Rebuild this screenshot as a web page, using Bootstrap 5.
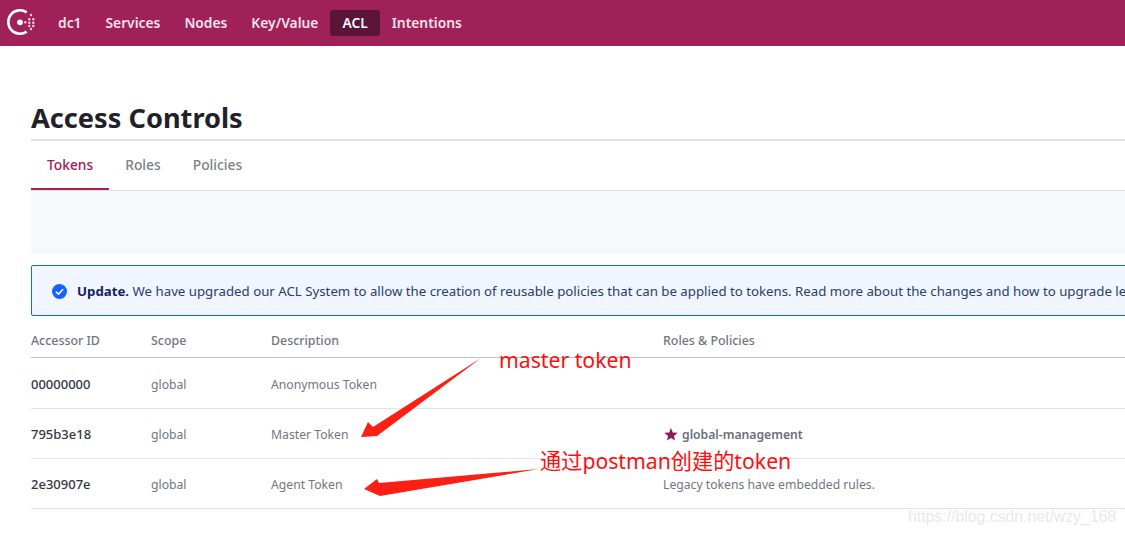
<!doctype html>
<html lang="en">

<head>
  <meta charset="utf-8">
  <meta name="viewport" content="width=device-width, initial-scale=1">
  <title>Access Controls</title>
  <link href="https://cdn.jsdelivr.net/npm/bootstrap@5.3.3/dist/css/bootstrap.min.css" rel="stylesheet">
  <style>
    body {
      font-family: "Noto Sans", "Noto Sans CJK SC", sans-serif;
      font-size: 13px;
      color: #6f7682;
      overflow: hidden;
      height: 534px;
      position: relative;
    }

    .top-bar {
      background: #a02058;
      height: 46px;
      padding-left: 7px;
    }

    .top-link {
      color: #f5e3ea;
      font-size: 13.8px;
      font-weight: 600;
      padding: 3px 12px;
      border-radius: 3px;
      text-decoration: none;
      line-height: 20px;
    }

    .top-link.is-on {
      background: #5a1437;
      color: #fff;
    }

    .logo-mark {
      margin-right: 10px;
    }

    .page-body {
      padding-left: 31px;
    }

    .page-title {
      font-size: 27.2px;
      font-weight: 700;
      line-height: 36px;
      color: #1f2329;
      margin: 54px 0 0;
      padding-bottom: 3px;
      border-bottom: 2px solid #dfe2e6;
      box-sizing: content-box;
    }

    .tab-row {
      height: 49px;
      border-bottom: 1px solid #dfe2e6;
      box-sizing: content-box;
    }

    .tab-link {
      color: #7a7f8a;
      font-size: 13.8px;
      font-weight: 500;
      padding: 0 16px;
      line-height: 48px;
      height: 49px;
      text-decoration: none;
    }

    .tab-link.is-on {
      color: #a02058;
      border-bottom: 2px solid #a02058;
    }

    .filter-strip {
      background: #f7f8fa;
      height: 63px;
    }

    .notice {
      height: 51px;
      margin-top: 11px;
      margin-right: -40px;
      padding-top: 2px;
      background: #f0f5ff;
      border: 1px solid #1563ff;
      border-radius: 2px;
      padding-left: 20px;
      white-space: nowrap;
      color: #2a3f66;
      font-size: 13.25px;
    }

    .notice b {
      color: #14245c;
      font-weight: 700;
    }

    .notice svg {
      margin-right: 10px;
      flex: none;
    }

    .t-row {
      display: grid;
      grid-template-columns: 120px 120px 392px 1fr;
      height: 50px;
      padding-top: 3px;
      align-items: center;
      border-bottom: 1px solid #e2e3ea;
      font-size: 12.2px;
    }

    .t-row.t-head {
      height: 42px;
      border-bottom-color: #bfc1c7;
      padding-top: 9px;
      font-size: 12.4px;
      font-weight: 500;
      color: #6f7682;
    }

    .t-row.t-first {
      height: 51px;
      padding-top: 4px;
    }

    .t-id {
      color: #31363f;
      font-weight: 500;
      font-size: 13px;
    }

    .t-policy {
      font-weight: 600;
      color: #6a6f7a;
    }

    .t-policy svg {
      margin: 0 4px 0 1px;
      vertical-align: -2px;
    }

    .ink-layer {
      position: absolute;
      left: 0;
      top: 0;
      pointer-events: none;
    }

    .ink-note {
      position: absolute;
      color: #fb0f0f;
      font-size: 21.2px;
      line-height: 28px;
      white-space: nowrap;
    }

    .note-one {
      left: 499px;
      top: 346px;
    }

    .note-two {
      left: 540px;
      top: 447px;
    }

    .watermark {
      position: absolute;
      left: 908px;
      top: 507px;
      font-family: "Liberation Sans", sans-serif;
      font-size: 15.8px;
      line-height: 20px;
      color: #e9e9eb;
      white-space: nowrap;
    }
  </style>
</head>

<body>

  <nav class="top-bar d-flex align-items-center">
    <svg class="logo-mark" width="29" height="30" viewBox="7 8 29 30">
      <path d="M26.7 12.4A11.7 11.7 0 1 0 26.7 31.6" fill="none" stroke="#fff" stroke-width="2.6" />
      <circle cx="20" cy="22.3" r="2.9" fill="#fff" />
      <g fill="#f3d6e2">
        <circle cx="25.3" cy="22.3" r="1.2" />
        <circle cx="31" cy="15" r="1.2" />
        <circle cx="29.3" cy="19.3" r="1.2" />
        <circle cx="33.3" cy="19.3" r="1.2" />
        <circle cx="29.3" cy="22.7" r="1.2" />
        <circle cx="33.3" cy="22.7" r="1.2" />
        <circle cx="29.3" cy="26" r="1.2" />
        <circle cx="33.3" cy="26" r="1.2" />
        <circle cx="31" cy="29" r="1.2" />
      </g>
    </svg>
    <a class="top-link" href="#">dc1</a>
    <a class="top-link" href="#">Services</a>
    <a class="top-link" href="#">Nodes</a>
    <a class="top-link" href="#">Key/Value</a>
    <a class="top-link is-on" href="#">ACL</a>
    <a class="top-link" href="#">Intentions</a>
  </nav>

  <div class="page-body">
    <h1 class="page-title">Access Controls</h1>

    <div class="tab-row d-flex">
      <a class="tab-link is-on" href="#">Tokens</a>
      <a class="tab-link" href="#">Roles</a>
      <a class="tab-link" href="#">Policies</a>
    </div>

    <div class="filter-strip"></div>

    <div class="notice d-flex align-items-center">
      <svg width="15" height="15" viewBox="0 0 15 15">
        <circle cx="7.5" cy="7.5" r="7.5" fill="#1563ff" />
        <path d="M4 7.8l2.5 2.4L11 5.2" fill="none" stroke="#fff" stroke-width="1.6" />
      </svg>
      <span><b>Update.</b> We have upgraded our ACL System to allow the creation of reusable policies that can be applied to tokens. Read more about the changes and how to upgrade le</span>
    </div>

    <div>
      <div class="t-row t-head">
        <div>Accessor ID</div>
        <div>Scope</div>
        <div>Description</div>
        <div>Roles &amp; Policies</div>
      </div>
      <div class="t-row t-first">
        <div class="t-id">00000000</div>
        <div>global</div>
        <div>Anonymous Token</div>
        <div></div>
      </div>
      <div class="t-row">
        <div class="t-id">795b3e18</div>
        <div>global</div>
        <div>Master Token</div>
        <div class="t-policy">
          <svg width="14" height="13" viewBox="0 0 14 13"><path d="M7 0l1.8 4.5 4.9.3-3.8 3.1 1.2 4.7L7 10l-4.1 2.6 1.2-4.7L.3 4.8l4.9-.3z" fill="#8e1c59" /></svg>global-management
        </div>
      </div>
      <div class="t-row">
        <div class="t-id">2e30907e</div>
        <div>global</div>
        <div>Agent Token</div>
        <div>Legacy tokens have embedded rules.</div>
      </div>
    </div>
  </div>

  <!-- annotations drawn over the screenshot -->
  <svg class="ink-layer" width="1125" height="534" viewBox="0 0 1125 534">
    <polygon points="481,358 377,436 361,437 368,422 373,427" fill="#fb1f14" />
    <polygon points="539,469 380,496 364,489 377,479 379,483" fill="#fb1f14" />
  </svg>
  <div class="ink-note note-one">master token</div>
  <div class="ink-note note-two">通过postman创建的token</div>
  <div class="watermark">https://blog.csdn.net/wzy_168</div>

  <script src="https://cdn.jsdelivr.net/npm/bootstrap@5.3.3/dist/js/bootstrap.bundle.min.js"></script>
</body>

</html>
